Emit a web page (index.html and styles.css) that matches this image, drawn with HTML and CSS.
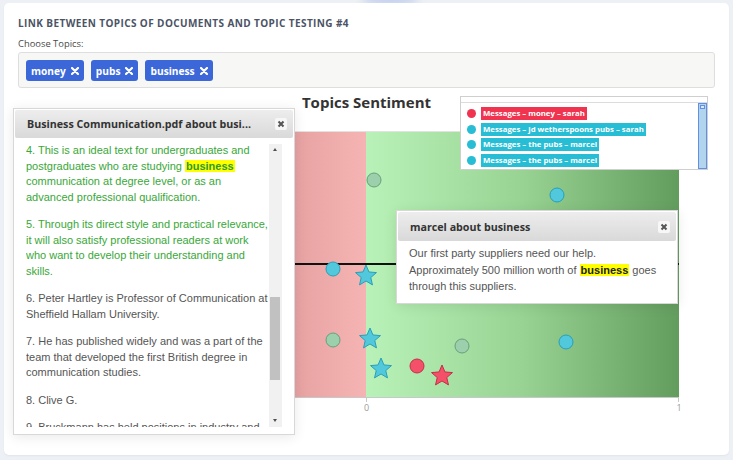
FILE: index.html
```html
<!DOCTYPE html>
<html>
<head>
<meta charset="utf-8">
<link rel="stylesheet" href="styles.css">
</head>
<body>
<div class="glow"></div>
<div class="card">
  <h1 class="title">LINK BETWEEN TOPICS OF DOCUMENTS AND TOPIC TESTING #4</h1>
  <div class="field-label">Choose Topics:</div>
  <div class="topic-input">
    <span class="chip">money<svg class="chip-x" viewBox="0 0 8 8"><path d="M1 1L7 7M7 1L1 7"/></svg></span>
    <span class="chip">pubs<svg class="chip-x" viewBox="0 0 8 8"><path d="M1 1L7 7M7 1L1 7"/></svg></span>
    <span class="chip">business<svg class="chip-x" viewBox="0 0 8 8"><path d="M1 1L7 7M7 1L1 7"/></svg></span>
  </div>

  <svg class="chart" width="697" height="367" viewBox="18 88 697 367">
    <defs>
      <linearGradient id="neg" x1="0" x2="1" y1="0" y2="0">
        <stop offset="0" stop-color="#e7a2a2"/>
        <stop offset="1" stop-color="#f5b4b3"/>
      </linearGradient>
      <linearGradient id="pos" x1="0" x2="1" y1="0" y2="0">
        <stop offset="0" stop-color="#b9f2b8"/>
        <stop offset="0.5" stop-color="#98d393"/>
        <stop offset="1" stop-color="#639d5e"/>
      </linearGradient>
      <path id="star" d="M0,-11 L2.94,-4.05 L10.46,-3.4 L4.76,1.55 L6.47,8.9 L0,5 L-6.47,8.9 L-4.76,1.55 L-10.46,-3.4 L-2.94,-4.05 Z"/>
    </defs>
    <text class="chart-title" x="366.5" y="108" text-anchor="middle">Topics Sentiment</text>
    <rect x="295" y="131" width="71" height="266" fill="url(#neg)"/>
    <rect x="366" y="131" width="313" height="266" fill="url(#pos)"/>
    <line x1="295" y1="131.5" x2="679" y2="131.5" stroke="#e2e2e2" stroke-width="1"/>
    <line x1="295" y1="264" x2="679" y2="264" stroke="#111" stroke-width="2"/>
    <line x1="295" y1="397.5" x2="679" y2="397.5" stroke="#c8c8c8" stroke-width="1"/>
    <line x1="366.5" y1="397" x2="366.5" y2="402" stroke="#c8c8c8"/>
    <line x1="678.5" y1="397" x2="678.5" y2="402" stroke="#c8c8c8"/>
    <text class="tick" x="366.5" y="411" text-anchor="middle">0</text>
    <text class="tick" x="679" y="411" text-anchor="middle">1</text>

    <g class="pt-grey">
      <circle cx="374" cy="180" r="7"/>
      <circle cx="333" cy="340" r="7"/>
      <circle cx="462" cy="346" r="7"/>
    </g>
    <g class="pt-cyan">
      <circle cx="557" cy="195" r="7"/>
      <circle cx="333" cy="269" r="7"/>
      <circle cx="566" cy="342" r="7"/>
      <use href="#star" x="366" y="276"/>
      <use href="#star" x="370" y="339"/>
      <use href="#star" x="381" y="369"/>
    </g>
    <g class="pt-red">
      <circle cx="417" cy="366" r="7"/>
      <use href="#star" x="442" y="376"/>
    </g>
  </svg>

  <div class="legend">
    <div class="legend-head"></div>
    <div class="legend-body">
      <ul class="legend-list">
        <li class="legend-item red"><span class="dot"></span><span class="tag">Messages – money – sarah</span></li>
        <li class="legend-item cyan"><span class="dot"></span><span class="tag">Messages – jd wetherspoons pubs – sarah</span></li>
        <li class="legend-item cyan"><span class="dot"></span><span class="tag">Messages – the pubs – marcel</span></li>
        <li class="legend-item cyan"><span class="dot"></span><span class="tag">Messages – the pubs – marcel</span></li>
      </ul>
      <div class="legend-scroll"><span class="legend-thumb-top"></span></div>
    </div>
  </div>

  <div class="popup doc-popup">
    <div class="popup-head">
      <span class="popup-title">Business Communication.pdf about busi...</span>
      <span class="close"><svg viewBox="0 0 8 8"><path d="M1.5 1.5L6.5 6.5M6.5 1.5L1.5 6.5"/></svg></span>
    </div>
    <div class="doc-body">
      <div class="doc-text">
        <p class="green">4. This is an ideal text for undergraduates and postgraduates who are studying <mark>business</mark> communication at degree level, or as an advanced professional qualification.</p>
        <p class="green">5. Through its direct style and practical relevance, it will also satisfy professional readers at work who want to develop their understanding and skills.</p>
        <p>6. Peter Hartley is Professor of Communication at Sheffield Hallam University.</p>
        <p>7. He has published widely and was a part of the team that developed the first British degree in communication studies.</p>
        <p>8. Clive G.</p>
        <p>9. Bruckmann has held positions in industry and education.</p>
      </div>
      <div class="scrollbar">
        <span class="arrow up"></span>
        <span class="thumb"></span>
        <span class="arrow down"></span>
      </div>
    </div>
  </div>

  <div class="popup msg-popup">
    <div class="popup-head">
      <span class="popup-title">marcel about business</span>
      <span class="close"><svg viewBox="0 0 8 8"><path d="M1.5 1.5L6.5 6.5M6.5 1.5L1.5 6.5"/></svg></span>
    </div>
    <div class="msg-body">Our first party suppliers need our help. Approximately 500 million worth of <mark>business</mark> goes through this suppliers.</div>
  </div>
</div>
</body>
</html>
```

FILE: styles.css
```css
html, body {
  margin: 0;
  padding: 0;
}
body {
  background: #edf0f4;
  width: 733px;
  height: 460px;
  overflow: hidden;
  position: relative;
  font-family: "Open Sans", "Liberation Sans", sans-serif;
}
.glow {
  position: absolute;
  left: 362px;
  top: -8px;
  width: 56px;
  height: 14px;
  border-radius: 50%;
  background: rgba(120, 150, 230, 0.35);
  filter: blur(5px);
}
.card {
  position: relative;
  margin: 3px 4px 0 4px;
  height: 452px;
  box-sizing: border-box;
  padding: 13px 14px 0 14px;
  background: #fff;
  border-radius: 5px;
  overflow: hidden;
  box-shadow: 0 1px 2px rgba(0, 0, 0, 0.05);
}
.title {
  margin: 0;
  font-size: 10px;
  line-height: 14px;
  font-weight: 700;
  color: #4b5366;
  letter-spacing: 0.4px;
}
.field-label {
  margin-top: 7px;
  font-size: 9.4px;
  line-height: 14px;
  color: #4a4a4a;
}
.topic-input {
  margin-top: 1px;
  height: 36px;
  box-sizing: border-box;
  border: 1px solid #dedede;
  border-radius: 3px;
  background: #f7f7f5;
  padding: 7px 7px 0 7px;
  display: flex;
  gap: 7px;
  align-items: flex-start;
}
.chip {
  display: inline-flex;
  align-items: center;
  gap: 5px;
  height: 21px;
  padding: 0 5px;
  box-sizing: border-box;
  background: #3b67d9;
  color: #fff;
  font-size: 10.2px;
  font-weight: 700;
  border-radius: 3px;
}
.chip-x {
  width: 8px;
  height: 8px;
  stroke: #fff;
  stroke-width: 2.2;
  stroke-linecap: round;
  fill: none;
}
.chart {
  display: block;
}
.chart-title {
  font-family: "Open Sans", "Liberation Sans", sans-serif;
  font-size: 15px;
  font-weight: 700;
  fill: #333;
}
.tick {
  font-family: "Open Sans", "Liberation Sans", sans-serif;
  font-size: 9px;
  fill: #9a9a9a;
}
.pt-grey circle {
  fill: #9ccfab;
  stroke: #6a9f7c;
  stroke-width: 1;
}
.pt-cyan circle, .pt-cyan use {
  fill: #52c8dd;
  stroke: #2a9fb6;
  stroke-width: 1;
}
.pt-red circle, .pt-red use {
  fill: #f4506a;
  stroke: #c42f48;
  stroke-width: 1;
}

/* legend */
.legend {
  position: absolute;
  left: 456px;
  top: 93px;
  width: 248px;
  height: 74px;
  box-sizing: border-box;
  border: 1px solid #cfcfcf;
  background: #fff;
  display: flex;
  flex-direction: column;
}
.legend-head {
  height: 5px;
  border-bottom: 1px solid #dcdcdc;
}
.legend-body {
  flex: 1;
  display: flex;
}
.legend-list {
  flex: 1;
  list-style: none;
  margin: 0;
  padding: 4px 0 0 6px;
  display: flex;
  flex-direction: column;
  gap: 2.7px;
}
.legend-item {
  display: flex;
  align-items: center;
  gap: 5px;
  height: 13px;
}
.dot {
  width: 9px;
  height: 9px;
  border-radius: 50%;
}
.tag {
  height: 13px;
  line-height: 13px;
  padding: 0 2px;
  font-size: 7.8px;
  font-weight: 700;
  color: #fff;
  white-space: nowrap;
}
.red .dot, .red .tag { background: #f0334f; }
.cyan .dot, .cyan .tag { background: #27bdd5; }
.legend-scroll {
  width: 9px;
  margin-right: 0;
  box-sizing: border-box;
  background: #b2d4ec;
  border: 1px solid #5f8fe6;
  position: relative;
}
.legend-thumb-top {
  position: absolute;
  left: 1px;
  right: 1px;
  top: 1px;
  height: 4px;
  border: 1px solid #5f8fe6;
  box-sizing: border-box;
  background: #d7e7f5;
}

/* popups */
.popup {
  position: absolute;
  box-sizing: border-box;
  background: #fff;
  border: 1px solid #d8d8d8;
  padding: 1px;
  box-shadow: 0 2px 12px rgba(0, 0, 0, 0.09);
  display: flex;
  flex-direction: column;
}
.doc-popup {
  left: 9px;
  top: 105px;
  width: 282px;
  height: 327px;
}
.msg-popup {
  left: 392px;
  top: 207px;
  width: 282px;
  height: 94px;
}
.popup-head {
  height: 28px;
  flex: none;
  display: flex;
  align-items: center;
  justify-content: space-between;
  padding: 0 6px 0 12px;
  background: linear-gradient(#ededed, #d9d9d9);
  border-radius: 2px;
}
.msg-popup .popup-head {
  height: 29px;
}
.popup-title {
  font-size: 10.7px;
  font-weight: 700;
  color: #333;
  white-space: nowrap;
}
.close {
  width: 12px;
  height: 12px;
  background: #f7f7f7;
  border-radius: 2px;
  display: flex;
  align-items: center;
  justify-content: center;
}
.close svg {
  width: 8px;
  height: 8px;
  stroke: #555;
  stroke-width: 2;
  fill: none;
}
.doc-body {
  flex: 1;
  display: flex;
  padding: 5px 11px 6px 11px;
  min-height: 0;
}
.doc-text {
  flex: 1;
  overflow: hidden;
  font-family: "Liberation Sans", Arial, sans-serif;
  font-size: 11px;
  line-height: 15.5px;
  color: #555;
}
.doc-text p {
  margin: 0 0 12px 0;
}
.doc-text .green {
  color: #38a838;
}
mark {
  background: #ffff00;
  color: inherit;
  font-weight: 700;
  padding: 0 1px;
}
.doc-text .green mark {
  color: #2e9a2e;
}
.scrollbar {
  width: 13px;
  flex: none;
  margin-top: 1px;
  background: #f1f1f1;
  position: relative;
}
.arrow {
  position: absolute;
  left: 4px;
  width: 0;
  height: 0;
  border-left: 2.5px solid transparent;
  border-right: 2.5px solid transparent;
}
.arrow.up {
  top: 4px;
  border-bottom: 3px solid #505050;
}
.arrow.down {
  bottom: 5px;
  border-top: 3px solid #505050;
}
.thumb {
  position: absolute;
  left: 1px;
  right: 2px;
  top: 153px;
  height: 83px;
  background: #c1c1c1;
}
.msg-body {
  padding: 4px 12px 0 11px;
  font-family: "Liberation Sans", Arial, sans-serif;
  font-size: 11px;
  line-height: 16.5px;
  color: #555;
}
.msg-body mark {
  color: #222;
}
```
